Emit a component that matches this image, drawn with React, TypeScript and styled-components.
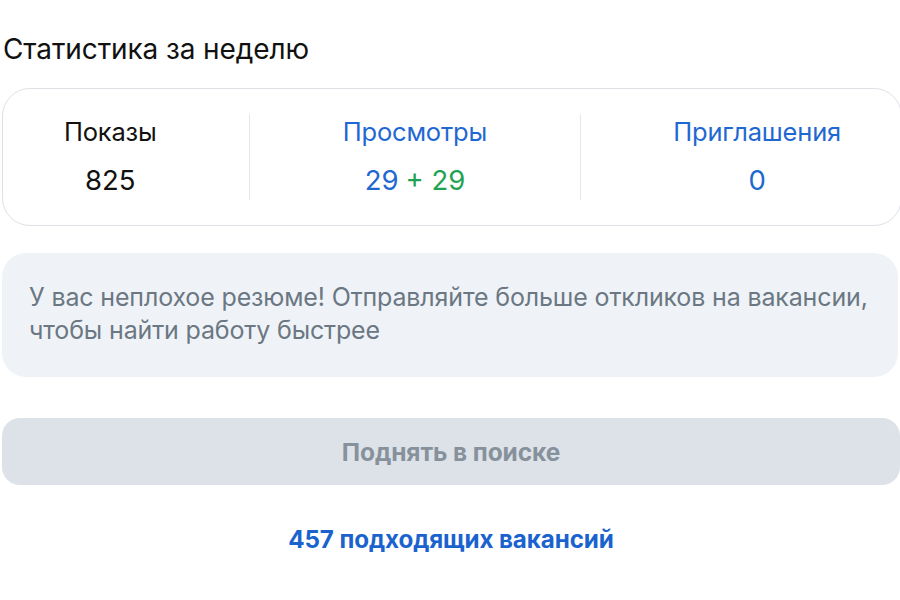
import React from "react";
import styled, { createGlobalStyle } from "styled-components";

const Global = createGlobalStyle`
  html, body { margin: 0; padding: 0; background: #ffffff; overflow: hidden; }
  body { font-family: Inter, "Noto Sans", "Liberation Sans", sans-serif; }
`;

const Page = styled.div`
  width: 900px;
  height: 600px;
  box-sizing: border-box;
  padding: 32px 0 0 2px;
  display: flex;
  flex-direction: column;
`;

const Title = styled.h2`
  margin: 0 0 0 1px;
  font-size: 28px;
  line-height: 34px;
  font-weight: 400;
  color: #111;
  letter-spacing: -0.1px;
`;

const StatsCard = styled.div`
  margin-top: 22px;
  width: 900px;
  flex-shrink: 0;
  height: 138px;
  box-sizing: border-box;
  border: 1.5px solid #dde1e6;
  border-radius: 28px;
  display: flex;
  align-items: center;
  justify-content: space-between;
  padding: 0 60px 0 61px;
`;

const Stat = styled.div`
  display: flex;
  flex-direction: column;
  align-items: center;
  gap: 16px;
`;

const StatLabel = styled.div<{ $tone?: "dark" | "blue" }>`
  font-size: 25.5px;
  line-height: 30px;
  color: ${(p) => (p.$tone === "blue" ? "#1f68d2" : "#111")};
  white-space: nowrap;
  letter-spacing: -0.2px;
`;

const StatValue = styled.div`
  font-size: 27.5px;
  line-height: 34px;
  white-space: nowrap;
  display: flex;
  gap: 7px;
`;

const Num = styled.span<{ $tone: "dark" | "blue" | "green" }>`
  color: ${(p) =>
    p.$tone === "blue" ? "#1f68d2" : p.$tone === "green" ? "#1fa352" : "#111"};
`;

const Divider = styled.div`
  width: 1px;
  height: 86px;
  background: #e4e7eb;
`;

const Hint = styled.div`
  margin-top: 27px;
  width: 896px;
  flex-shrink: 0;
  box-sizing: border-box;
  height: 124px;
  border-radius: 24px;
  background: #eff3f8;
  padding: 28px 10px 0 27px;
  font-size: 25px;
  line-height: 33px;
  color: #6b7782;
  letter-spacing: -0.15px;
  white-space: nowrap;
`;

const RaiseButton = styled.button`
  margin-top: 41px;
  width: 898px;
  height: 67px;
  flex-shrink: 0;
  border: none;
  border-radius: 18px;
  background: #dde2e8;
  color: #86919c;
  font-family: inherit;
  font-size: 24.5px;
  font-weight: 700;
  letter-spacing: -0.1px;
  display: flex;
  align-items: center;
  justify-content: center;
  padding: 0;
`;

const VacLink = styled.a`
  margin-top: 39px;
  width: 898px;
  text-align: center;
  font-size: 24.2px;
  line-height: 32px;
  font-weight: 700;
  color: #1a63cf;
  text-decoration: none;
  letter-spacing: -0.1px;
`;

export default function App() {
  return (
    <>
      <Global />
      <Page>
        <Title>Статистика за неделю</Title>
        <StatsCard>
          <Stat>
            <StatLabel $tone="dark">Показы</StatLabel>
            <StatValue>
              <Num $tone="dark">825</Num>
            </StatValue>
          </Stat>
          <Divider />
          <Stat>
            <StatLabel $tone="blue">Просмотры</StatLabel>
            <StatValue>
              <Num $tone="blue">29</Num>
              <Num $tone="green">+ 29</Num>
            </StatValue>
          </Stat>
          <Divider />
          <Stat>
            <StatLabel $tone="blue">Приглашения</StatLabel>
            <StatValue>
              <Num $tone="blue">0</Num>
            </StatValue>
          </Stat>
        </StatsCard>
        <Hint>
          У вас неплохое резюме! Отправляйте больше откликов на вакансии,
          <br />
          чтобы найти работу быстрее
        </Hint>
        <RaiseButton>Поднять в поиске</RaiseButton>
        <VacLink href="#">457 подходящих вакансий</VacLink>
      </Page>
    </>
  );
}
